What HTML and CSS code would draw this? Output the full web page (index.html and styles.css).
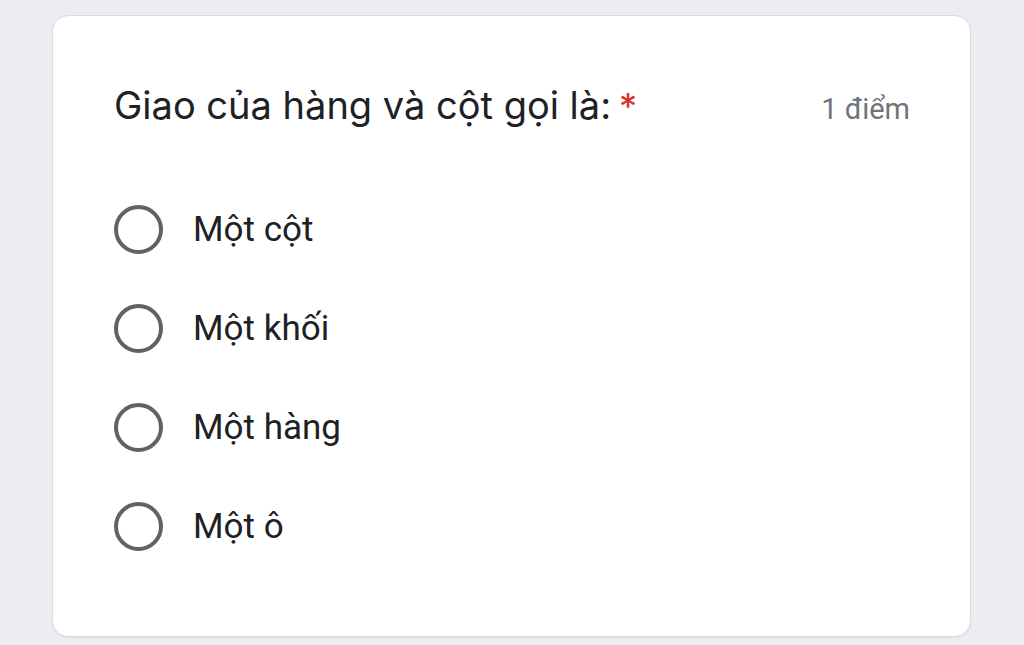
FILE: index.html
```html
<!DOCTYPE html>
<html lang="vi">
<head>
<meta charset="utf-8">
<link rel="stylesheet" href="styles.css">
</head>
<body>
<div class="card">
  <div class="header">
    <div class="title">Giao của hàng và cột gọi là:<span class="req">*</span></div>
    <div class="points">1 điểm</div>
  </div>
  <div class="options">
    <label class="option"><span class="radio"></span><span class="label">Một cột</span></label>
    <label class="option"><span class="radio"></span><span class="label">Một khối</span></label>
    <label class="option"><span class="radio"></span><span class="label">Một hàng</span></label>
    <label class="option"><span class="radio"></span><span class="label">Một ô</span></label>
  </div>
</div>
</body>
</html>
```
FILE: styles.css
```css
html, body {
  margin: 0;
  padding: 0;
  background: #edecf2;
  height: 645px;
  overflow: hidden;
}
.card {
  box-sizing: border-box;
  margin: 15px 53px 0 52px;
  height: 622px;
  background: #ffffff;
  border: 1.5px solid #d9d9df;
  border-radius: 16px;
  padding: 0 60px 0 61px;
  box-shadow: 0 1px 2px rgba(0,0,0,0.06);
}
.header {
  display: flex;
  justify-content: space-between;
  align-items: baseline;
  padding-top: 65px;
}
.title {
  font-family: Inter, "Open Sans", sans-serif;
  font-size: 38px;
  line-height: 48px;
  color: #202124;
  letter-spacing: 0;
}
.req {
  color: #d93025;
  margin-left: 8px;
  font-size: 36px;
}
.points {
  font-family: Roboto, sans-serif;
  font-size: 29px;
  color: #70757a;
}
.options {
  display: flex;
  flex-direction: column;
  gap: 51px;
  margin-top: 75px;
}
.option {
  display: flex;
  align-items: center;
  gap: 30px;
  height: 48px;
}
.radio {
  box-sizing: border-box;
  width: 49px;
  height: 49px;
  border: 4px solid #5f6368;
  border-radius: 50%;
  flex: none;
}
.label {
  font-family: Roboto, sans-serif;
  font-size: 35px;
  color: #202124;
}
```
